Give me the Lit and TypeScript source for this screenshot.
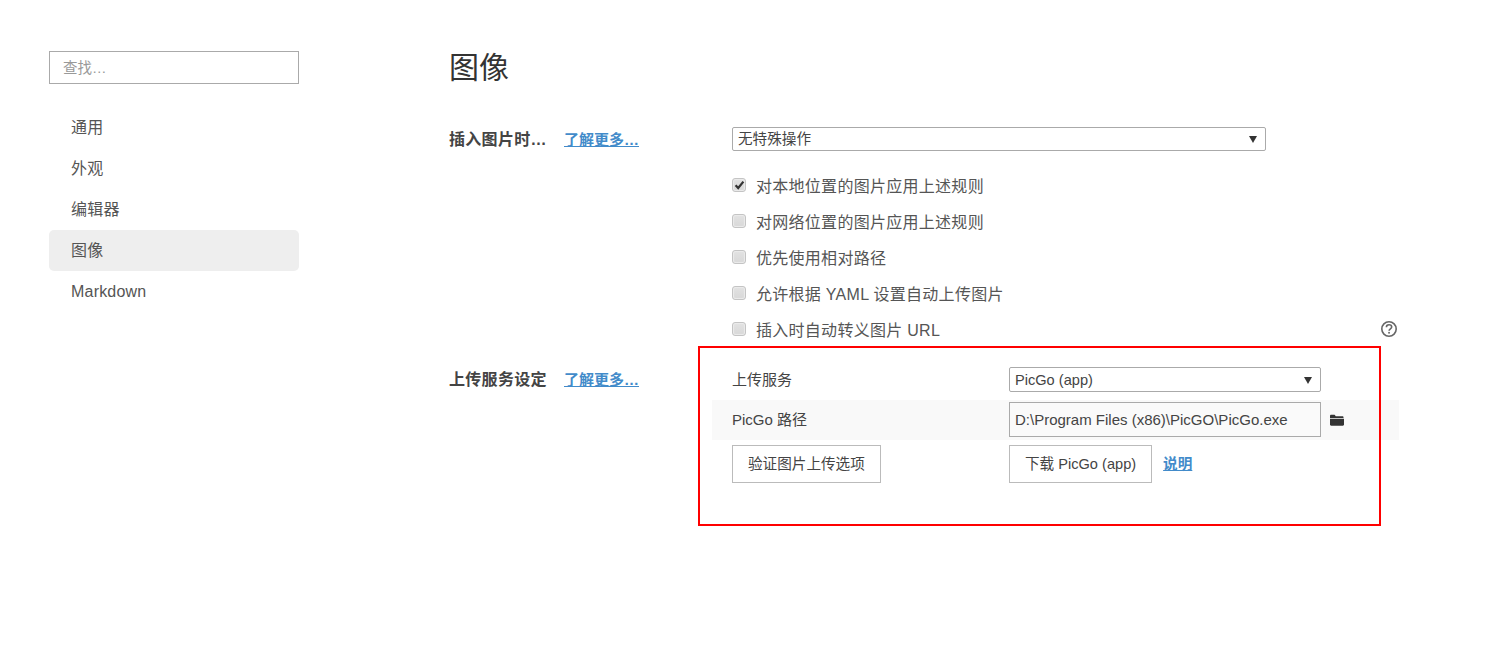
import { LitElement, html, css } from "lit";
import { customElement } from "lit/decorators.js";

const FONT = css`"Liberation Sans", "Noto Sans CJK SC", sans-serif`;

@customElement("app-root")
export class AppRoot extends LitElement {
  static styles = css`
    :host {
      display: block;
      position: relative;
      height: 648px;
      overflow: hidden;
      background: #fff;
      color: #333;
      font-family: ${FONT};
      font-size: 16px;
    }
    .page { display: flex; align-items: flex-start; }
    .side { width: 250px; margin: 51px 0 0 49px; flex: none; }
    .search {
      display: block; box-sizing: border-box; width: 250px; height: 33px;
      border: 1px solid #aaa; padding: 0 13px; font: 14.5px ${FONT}; color: #333; outline: none;
    }
    .search::placeholder { color: #999; opacity: 1; }
    .nav { list-style: none; margin: 23px 0 0; padding: 0; }
    .nav li {
      height: 41px; line-height: 41px; padding-left: 22px; border-radius: 5px;
      color: #555; letter-spacing: 0.2px; font-size: 16px;
    }
    .nav li.active { background: #eee; }
    .main { margin-left: 150px; width: 950px; flex: none; }
    h1 { margin: 0; padding-top: 46px; height: 127px; box-sizing: border-box; font-size: 30px; line-height: 44px; font-weight: 400; color: #333; }
    .section { display: grid; grid-template-columns: 283px 1fr; }
    .label { display: flex; gap: 17px; padding-top: 1px; font-weight: 700; font-size: 16px; line-height: 24px; color: #444; white-space: nowrap; letter-spacing: 0.3px; }
    .label span { width: 98px; }
    .label a { font-size: 15px; letter-spacing: 0; }
    a { color: #428bca; text-decoration: underline; font-weight: 700; }
    .select { position: relative; display: block; box-sizing: border-box; }
    select {
      appearance: none; display: block; width: 100%; height: 100%; box-sizing: border-box;
      background: #fff; border: 1px solid #aaa; border-radius: 2px; color: #444;
      padding: 0 5px; font: 14.6px ${FONT}; outline: none;
    }
    .select::after {
      content: ""; position: absolute; right: 9px; top: 50%; margin-top: -3px;
      border-left: 4px solid transparent; border-right: 4px solid transparent; border-top: 7px solid #333;
    }
    .wide { width: 534px; height: 24px; }
    .checks { margin-top: 16px; position: relative; width: 667px; }
    .check { display: flex; align-items: center; gap: 10px; height: 36px; font-size: 16px; letter-spacing: 0.28px; color: #555; }
    .box {
      flex: none; box-sizing: border-box; width: 14px; height: 14px;
      border: 1px solid #c4c4c4; border-radius: 3px;
      background: linear-gradient(#e2e2e2, #d8d8d8);
      box-shadow: inset 0 0 1px 1px #ececec;
      display: flex; align-items: center; justify-content: center;
    }
    .help { position: absolute; right: 1px; top: 153px; display: block; }
    .upload { margin-top: 13px; }
    .upload .label { padding-top: 8px; }
    .rows { margin-left: -20px; width: 687px; }
    .row { display: grid; grid-template-columns: 277px 312px auto; padding-left: 20px; height: 40px; align-items: center; box-sizing: border-box; font-size: 15px; color: #444; }
    .row > span { margin-top: -3px; }
    .row.alt { background: #f9f9f9; }
    .row .select { height: 25px; margin-top: -1px; }
    .path {
      box-sizing: border-box; width: 312px; height: 35px; border: 1px solid #aaa; background: #fafafa;
      padding: 0 5px; font: 15px ${FONT}; color: #444; outline: none; margin-top: -1px;
    }
    .folder { display: block; margin-left: 8px; }
    .actions { display: grid; grid-template-columns: 277px auto; justify-items: start; padding: 5px 0 0 20px; }
    .btn {
      box-sizing: border-box; height: 38px; border: 1px solid #bbb; background: #fff; color: #444;
      font: 14.6px ${FONT}; padding: 0 15px 4px; white-space: nowrap; border-radius: 0;
    }
    .dl { display: flex; align-items: center; gap: 11px; font-size: 14.6px; }
    .dl a { margin-top: -4px; }
    .mark { position: absolute; left: 698px; top: 346px; width: 683px; height: 180px; box-sizing: border-box; border: 2px solid #f00; pointer-events: none; }
  `;

  render() {
    const checks: [string, boolean][] = [
      ["对本地位置的图片应用上述规则", true],
      ["对网络位置的图片应用上述规则", false],
      ["优先使用相对路径", false],
      ["允许根据 YAML 设置自动上传图片", false],
      ["插入时自动转义图片 URL", false],
    ];
    return html`
      <div class="page">
        <aside class="side">
          <input class="search" placeholder="查找…" />
          <ul class="nav">
            <li>通用</li>
            <li>外观</li>
            <li>编辑器</li>
            <li class="active">图像</li>
            <li>Markdown</li>
          </ul>
        </aside>
        <main class="main">
          <h1>图像</h1>
          <section class="section">
            <div class="label"><span>插入图片时…</span><a href="#">了解更多…</a></div>
            <div>
              <label class="select wide"><select><option>无特殊操作</option></select></label>
              <div class="checks">
                ${checks.map(
                  ([t, on]) => html`<div class="check">
                    <span class="box">${on
                      ? html`<svg width="11" height="10" viewBox="0 0 11 10"><path d="M1.6 5.2 4.2 8 9.4 1.6" fill="none" stroke="#333" stroke-width="2.2"/></svg>`
                      : ""}</span>
                    <span>${t}</span>
                  </div>`
                )}
                <svg class="help" width="18" height="18" viewBox="0 0 18 18">
                  <circle cx="9" cy="9" r="7.2" fill="none" stroke="#666" stroke-width="1.6"/>
                  <path d="M6.4 7.2c0-1.6 1.1-2.5 2.6-2.5s2.7.9 2.7 2.2c0 1.9-2.6 1.9-2.6 3.8" fill="none" stroke="#666" stroke-width="1.6"/>
                  <rect x="8.2" y="11.9" width="1.7" height="1.7" fill="#666"/>
                </svg>
              </div>
            </div>
          </section>
          <section class="section upload">
            <div class="label"><span>上传服务设定</span><a href="#">了解更多…</a></div>
            <div class="rows">
              <div class="row">
                <span>上传服务</span>
                <label class="select"><select><option>PicGo (app)</option></select></label>
              </div>
              <div class="row alt">
                <span>PicGo 路径</span>
                <input class="path" .value=${"D:\\Program Files (x86)\\PicGO\\PicGo.exe"} />
                <svg class="folder" width="16" height="14" viewBox="0 0 16 14">
                  <path d="M1 3c0-.7.5-1.2 1.2-1.2h3.4l1.2 1.4h6.6c.7 0 1.1.4 1.1 1V5H1z" fill="#333"/>
                  <path d="M1 5.8h14v5.7c0 .7-.5 1.2-1.2 1.2H2.2c-.7 0-1.2-.5-1.2-1.2z" fill="#333"/>
                </svg>
              </div>
              <div class="actions">
                <button class="btn">验证图片上传选项</button>
                <div class="dl"><button class="btn">下载 PicGo (app)</button><a href="#">说明</a></div>
              </div>
            </div>
          </section>
        </main>
      </div>
      <div class="mark"></div>
    `;
  }
}
